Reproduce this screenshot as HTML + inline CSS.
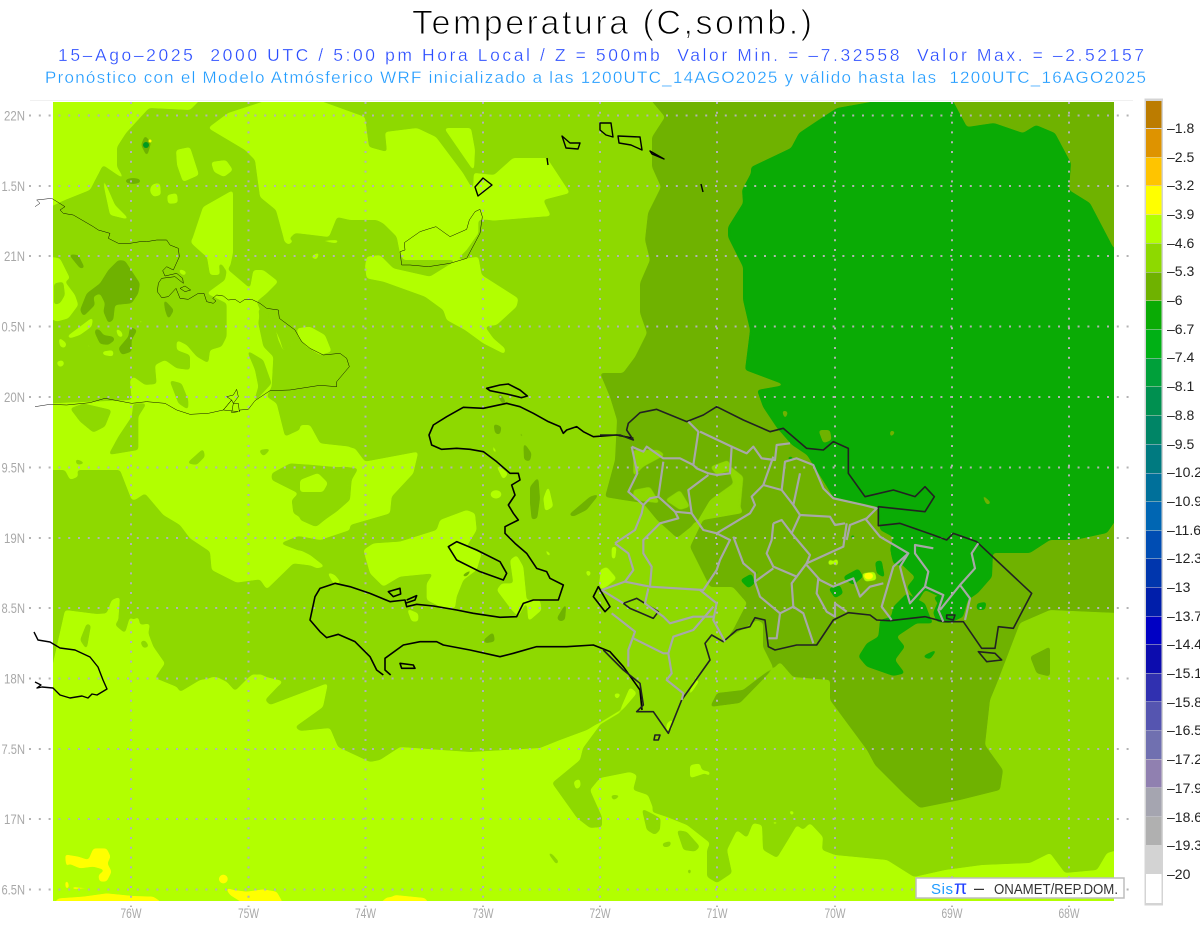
<!DOCTYPE html>
<html><head><meta charset="utf-8"><title>Temperatura</title>
<style>html,body{margin:0;padding:0;background:#fff}svg{display:block}text{font-family:"Liberation Sans",sans-serif;white-space:pre}</style></head>
<body>
<svg xmlns="http://www.w3.org/2000/svg" width="1200" height="927" viewBox="0 0 1200 927">
<defs><clipPath id="m"><rect x="53" y="102" width="1061" height="799"/></clipPath>
<filter id="s" x="-10%" y="-10%" width="120%" height="120%" color-interpolation-filters="sRGB"><feGaussianBlur stdDeviation="1.5"/><feComponentTransfer><feFuncA type="linear" slope="10" intercept="-4.5"/></feComponentTransfer></filter>
<filter id="s3" x="-10%" y="-10%" width="120%" height="120%" color-interpolation-filters="sRGB"><feGaussianBlur stdDeviation="4.5"/><feComponentTransfer><feFuncA type="linear" slope="10" intercept="-4.5"/></feComponentTransfer></filter>
</defs>
<rect width="1200" height="927" fill="#fff"/>
<text x="412" y="34" font-size="34" fill="#000" stroke="#fff" stroke-width="1" textLength="400" lengthAdjust="spacing">Temperatura (C,somb.)</text>
<text x="58" y="61" font-size="17.5" fill="#2a4cff" stroke="#fff" stroke-width=".3" textLength="1086" lengthAdjust="spacing">15–Ago–2025  2000 UTC / 5:00 pm Hora Local / Z = 500mb  Valor Min. = –7.32558  Valor Max. = –2.52157</text>
<text x="45" y="83" font-size="17" fill="#1f9bff" stroke="#fff" stroke-width=".3" textLength="1101" lengthAdjust="spacing">Pronóstico con el Modelo Atmósferico WRF inicializado a las 1200UTC_14AGO2025 y válido hasta las  1200UTC_16AGO2025</text>
<rect x="30" y="100" width="1103" height="1" fill="#f0f0f0"/>
<g clip-path="url(#m)">
<rect x="53" y="102" width="1061" height="799" fill="#8ed900"/>
<g fill="#b2ff00" filter="url(#s)">
<polygon points="50,99 201,99 190,110 149,108 126,133 117,147 117,167 125,180 103,165 90,190 65,200 50,207"/>
<polygon points="208,128 228,113 268,100 318,100 365,117 369,147 387,152 385,132 417,128 436,137 463,173 473,190 475,150 471,128 444,128 475,173 494,175 513,158 547,158 570,193 543,200 551,216 480,220 350,220 337,217 329,237 295,233 285,243 276,210 260,197 255,160 245,150"/>
<polygon points="203,207 233,190 233,253 230,267 210,260 191,243"/>
<polygon points="101,173 115,205 130,220 110,215"/>
<polygon points="153,184 160,183 161,195 153,197"/>
<polygon points="167,195 177,193 178,203 168,204"/>
<polygon points="176,150 190,147 199,175 183,182 177,165"/>
<polygon points="211,162 226,160 233,170 224,177 214,172"/>
<ellipse cx="155" cy="190" rx="5" ry="6"/>
<g transform="translate(50,240) scale(.33333)">
<polygon points="0,490 245,480 240,420 250,410 285,435 320,432 315,375 345,360 380,385 420,390 420,345 380,330 380,300 410,315 440,350 475,370 480,330 515,320 530,290 530,180 590,180 620,185 630,210 625,250 640,320 670,350 665,440 650,470 680,490 705,590 780,555 810,610 900,620 900,690 0,690"/>
<polygon points="420,0 540,0 535,90 600,145 610,90 640,90 685,125 650,160 620,185 590,180 530,190 470,160 525,120 530,95 505,55 510,105 480,105 470,45"/>
<polygon points="0,50 30,55 60,115 45,125 75,165 85,195 55,235 20,245 0,235"/>
<polygon points="50,290 130,230 125,260 90,285 60,295"/>
<polygon points="25,290 50,310 45,325 30,320"/>
<polygon points="18,365 40,360 43,375 28,383"/>
<polygon points="105,295 125,325 115,325"/>
<polygon points="155,335 190,330 190,350 160,345"/>
<polygon points="195,262 215,275 220,293 205,290"/>
<polygon points="265,240 280,240 272,255"/>
<polygon points="385,85 410,95 405,108 390,100"/>
<polygon points="780,50 810,35 800,60"/>
<polygon points="700,0 735,0 715,15"/>
<polygon points="770,0 870,0 860,10"/>
<polygon points="670,240 700,255 722,285 720,320 700,333 685,300"/>
<polygon points="740,265 780,260 825,285 845,335 810,345 770,320 745,290"/>
</g>
<g transform="translate(350,200) scale(.33333)">
<polygon points="0,60 15,55 45,35 60,50 100,70 140,110 150,160 160,180 320,180 350,150 385,100 385,55 430,62 600,48 580,0 0,0"/>
<polygon points="50,170 90,165 130,205 240,230 320,180 385,170 395,225 505,295 500,320 440,375 405,380 430,415 465,445 465,463 400,430 345,390 290,360 280,330 225,290 100,245 50,235 45,200"/>
</g>
<g transform="translate(50,460) scale(.33333)">
<polygon points="200,0 210,30 245,120 255,120 285,100 340,165 390,195 420,235 480,275 485,330 560,368 630,358 650,388 730,310 825,322 780,285 690,250 745,228 810,240 900,210 900,0"/>
<polygon points="30,0 60,60 85,50 75,0"/>
<polygon points="100,0 190,0 190,15 130,15"/>
<polygon points="830,335 855,345 873,368 845,360"/>
<polygon points="430,675 490,650 530,675"/>
<polygon points="590,655 630,642 700,675"/>
<polygon points="0,680 0,650 45,450 140,462 170,460 185,420 210,410 205,480 195,495 225,520 240,470 250,480 265,470 270,495 300,490 295,520 310,560 345,610 315,650 240,655 240,680"/>
</g>
<g transform="translate(300,370) scale(.33333)">
<polygon points="0,165 30,165 60,220 165,235 195,275 355,245 340,310 275,380 270,430 150,465 65,510 0,455"/>
<polygon points="190,540 220,520 300,515 410,480 420,450 500,420 525,430 530,480 500,530 545,550 530,600 490,630 470,680 465,715 430,715 380,690 380,640 400,610 300,620 250,650 210,610"/>
<polygon points="630,570 650,555 670,590 680,690 720,690 725,720 685,755 680,695 655,740 635,720 590,660 605,640 640,640"/>
<polygon points="0,540 30,555 75,590 50,595 0,570"/>
<polygon points="80,605 125,640 100,640"/>
<polygon points="320,715 355,730 355,755 335,755"/>
<polygon points="140,745 155,750 145,755"/>
<polygon points="475,765 498,775 490,782"/>
<ellipse cx="588" cy="373" rx="17" ry="13"/>
<polygon points="745,345 760,410 735,425 730,385"/>
<polygon points="570,205 595,255 580,245"/>
<polygon points="585,280 625,310 610,330"/>
<polygon points="725,525 755,555 745,560"/>
<polygon points="855,600 875,605 865,625"/>
<polygon points="905,595 945,625 920,640 895,650"/>
<polygon points="935,530 950,530 945,570 935,565"/>
</g>
<polygon points="50,673 60,643 80,640 88,640 83,652 100,640 155,653 165,663 155,678 177,687 180,692 200,680 217,677 227,682 235,691 248,678 253,674 283,681 265,700 270,705 328,683 323,707 295,727 300,731 330,728 338,747 370,762 380,760 400,747 470,752 540,748 560,740 587,730 620,710 630,687 637,693 620,713 600,725 583,748 580,760 552,783 577,818 590,828 602,827 602,817 590,790 600,778 630,772 637,775 633,790 648,795 653,808 652,812 667,817 687,825 710,843 707,850 707,877 717,883 732,873 727,850 737,830 747,838 753,823 762,825 763,850 777,858 788,840 797,825 803,830 810,823 823,837 822,850 835,855 887,860 914,877 945,870 982,865 1030,863 1050,853 1065,873 1097,870 1107,853 1118,850 1118,905 50,905"/>
</g>
<g fill="#8ed900" filter="url(#s)">
<g transform="translate(50,240) scale(.33333)">
<polygon points="12,130 40,125 45,165 30,190 12,195"/>
<polygon points="60,505 100,490 185,510 165,560 130,578 90,545"/>
<polygon points="250,490 290,490 265,530 265,630 175,645 205,590 245,530"/>
<polygon points="358,420 395,430 415,480 415,510 385,490"/>
<polygon points="590,330 640,360 665,430 610,490 625,440 615,390"/>
<polygon points="410,670 460,625 465,650 440,675"/>
<polygon points="625,630 665,625 640,650"/>
<polygon points="75,655 110,670 80,675"/>
<polygon points="625,205 665,215 665,245 690,300 700,333 720,325 745,290 740,270 700,255 670,235 630,250"/>
</g>
<g transform="translate(50,460) scale(.33333)">
<polygon points="665,40 720,10 790,15 900,25 900,120 860,150 800,200 730,160 725,120 745,100 665,60"/>
<polygon points="90,540 110,490 123,495 110,570"/>
<polygon points="270,545 285,540 298,560 280,565"/>
<polygon points="315,385 335,385 325,398"/>
</g>
<g transform="translate(300,370) scale(.33333)">
<polygon points="0,285 50,300 130,290 175,295 155,330 150,390 110,425 45,470 0,450"/>
</g>
<g transform="translate(540,680) scale(.33333)">
<polygon points="305,385 335,400 362,415 360,450 345,465 320,450"/>
<polygon points="410,450 440,455 480,500 465,515 430,510"/>
<polygon points="365,490 395,482 390,500 370,502"/>
<polygon points="255,390 275,390 270,400"/>
<polygon points="210,345 245,345 220,362"/>
<polygon points="20,515 35,520 57,545 50,555"/>
<polygon points="440,570 455,565 450,590"/>
</g>
</g>
<g fill="#b2ff00" filter="url(#s)">
<polygon points="300,480 318,473 328,483 323,492 300,492"/>
<g transform="translate(540,680) scale(.33333)">
<polygon points="100,305 120,295 122,320 108,330"/>
<polygon points="450,255 480,250 485,270 510,275 510,290 495,280 465,290 450,295"/>
<polygon points="745,390 765,395 755,410"/>
<polygon points="220,40 245,40 230,60"/>
<polygon points="690,425 720,425 705,435"/>
<polygon points="380,130 400,115 395,150 378,155"/>
<polygon points="460,0 480,0 440,60"/>
</g>
</g>
<g fill="#6fb200" filter="url(#s)">
<polygon points="650,99 665,117 652,137 652,167 661,187 648,213 645,240 650,260 640,283 640,313 647,333 635,357 623,373 600,373 610,397 617,420 615,460 605,497 623,500 643,503 657,520 677,538 697,522 710,500 733,488 743,513 703,520 690,547 710,587 733,587 747,603 733,630 725,640 757,620 763,623 763,647 773,667 743,690 717,693 710,707 740,703 780,662 793,677 830,680 830,700 847,723 867,750 875,765 905,795 920,808 960,800 1000,790 1003,770 985,745 990,700 997,683 1020,623 1050,610 1118,613 1118,99"/>
</g>
<g fill="#6fb200" filter="url(#s)">
<g transform="translate(50,240) scale(.33333)">
<polygon points="205,60 225,62 250,100 270,130 265,160 245,190 195,195 190,240 175,250 160,215 165,190 150,160 130,170 135,195 100,230 90,210 110,160 150,130 175,90"/>
<polygon points="55,42 85,45 105,85 90,85"/>
<polygon points="155,70 175,68 165,78"/>
<polygon points="135,265 150,270 160,285 190,290 195,300 175,315 150,312 135,280"/>
<polygon points="240,260 262,270 245,300 245,335 215,345 205,325 235,290"/>
<polygon points="340,175 372,210 355,240 345,210"/>
</g>
<g transform="translate(300,370) scale(.33333)">
<polygon points="580,160 605,170 600,195 585,190"/>
<polygon points="660,175 672,205 660,200"/>
<polygon points="670,215 695,250 690,275 672,270"/>
<polygon points="690,350 715,320 720,385 712,445 695,450 690,400"/>
<polygon points="805,435 870,380 900,370 860,420 820,440"/>
<polygon points="550,810 580,785 585,815 555,820"/>
<polygon points="770,745 800,695 795,750 780,755"/>
<polygon points="590,70 605,75 620,100 605,100"/>
<polygon points="410,600 460,570 415,605"/>
<polygon points="480,620 525,590 500,620"/>
</g>
<ellipse cx="133" cy="181" rx="8" ry="3"/>
<polygon points="145,135 151,143 147,157 141,145"/>
<polygon points="1033,657 1050,646 1050,675 1037,673"/>
</g>
<g fill="#0aab05" filter="url(#s)">
<polygon points="887,99 837,108 826,115 799,133 791,148 751,167 751,173 742,190 743,203 728,227 728,237 743,267 743,300 750,330 745,370 785,385 757,390 763,407 777,428 792,445 807,455 827,487 833,497 860,503 878,507 880,530 893,537 890,550 893,558 900,563 915,577 907,587 917,603 925,590 940,597 933,613 937,622 950,623 963,617 968,600 978,593 992,577 993,553 1030,553 1050,540 1075,540 1107,533 1118,517 1118,250 1113,247 1090,203 1069,190 1071,163 1055,133 1036,125 1023,133 994,123 967,127 952,99"/>
</g>
<g transform="translate(600,390) scale(.33333)">
<g fill="#0aab05" filter="url(#s3)">
<polygon points="840,690 975,650 1000,700 950,700 890,740 915,770 885,810 915,850 880,858 800,830 775,800 800,760 835,740"/>
<polygon points="880,650 920,610 975,640 990,680 870,695"/>
<polygon points="965,800 1015,775 990,808"/>
<polygon points="420,570 455,550 465,580 445,595"/>
<polygon points="465,550 480,520 470,565"/>
<polygon points="730,560 775,535 790,560 760,585 735,570"/>
<polygon points="825,515 845,510 855,565 830,550"/>
<polygon points="685,595 720,585 730,610 705,625"/>
<polygon points="1130,640 1160,635 1155,660 1130,660"/>
<polygon points="750,435 770,435 755,450"/>
<polygon points="560,200 585,200 570,215"/>
<polygon points="870,480 905,490 905,530 880,520"/>
<polygon points="1000,620 1030,615 1025,660"/>
</g>
<g fill="#6fb200" filter="url(#s3)">
<polygon points="545,60 565,65 555,90"/>
<polygon points="655,120 690,120 695,150 670,160"/>
<polygon points="870,120 888,125 870,145"/>
<polygon points="1140,305 1175,340 1160,345"/>
<polygon points="1215,355 1250,358 1215,362"/>
<polygon points="1080,90 1095,95 1085,100"/>
<polygon points="735,140 748,145 740,155"/>
<polygon points="1290,800 1350,770 1350,860 1310,850"/>
</g>
<g fill="#8ed900" filter="url(#s3)">
<polygon points="100,180 175,180 195,195 130,230 100,260"/>
<polygon points="145,260 240,215 150,255"/>
<polygon points="100,300 150,290 180,340 100,330"/>
<polygon points="195,330 240,300 270,350 240,360"/>
<polygon points="330,230 385,210 395,240 350,255"/>
<polygon points="380,220 430,260 420,370 330,380 330,330 400,280"/>
<polygon points="230,445 250,440 285,395 310,395 290,420"/>
</g>
<g fill="#b2ff00" filter="url(#s3)">
<polygon points="785,550 825,545 830,570 795,575"/>
<polygon points="685,510 697,508 697,526 685,526"/>
<polygon points="702,508 714,506 714,527 702,527"/>
<polygon points="0,540 20,530 50,565 20,590 0,600"/>
</g>
<ellipse cx="806" cy="558" rx="13" ry="10" fill="#ffff00"/>
</g>
<g fill="#ffff00" filter="url(#s)">
<g transform="translate(0,640) scale(.33333)">
<polygon points="195,642 205,645 235,650 265,660 280,625 320,625 332,650 322,670 335,695 320,725 298,725 295,705 315,690 280,680 240,685 205,670 200,695"/>
<polygon points="195,720 205,725 207,745 197,748"/>
<polygon points="215,740 270,743 270,748 215,748"/>
<circle cx="670" cy="717" r="14"/>
<polygon points="160,790 175,775 250,770 320,760 400,768 460,770 490,790"/>
<polygon points="675,742 700,750 740,755 790,748 830,755 850,790 730,790 690,765"/>
<polygon points="1030,790 1050,780 1060,790"/>
<polygon points="1140,790 1160,772 1200,770 1200,790"/>
</g>
<polygon points="378,905 395,895 425,898 430,905"/>
</g>
<circle cx="146" cy="145" r="3" fill="#009a20"/>
<circle cx="150" cy="141" r="1.5" fill="#ffff00"/>
</g>
<g stroke="#b3b3b3" stroke-width="2" stroke-dasharray="2 7.8" fill="none">
<path d="M29,115.5H1135M29,186H1135M29,256H1135M29,326.5H1135M29,397H1135M29,467.5H1135M29,538H1135M29,608H1135M29,678.5H1135M29,749H1135M29,819H1135M29,889.5H1135"/>
<path d="M131,102V907M248.5,102V907M365.5,102V907M483,102V907M600,102V907M717,102V907M835,102V907M952,102V907M1069,102V907"/>
</g>
<g fill="none" stroke="#000" stroke-width="1.4" stroke-linejoin="round">
<g transform="translate(50,240) scale(.33333)">
<polyline points="-45,-100 -30,-110 -40,-120 5,-125 45,-100 30,-90 40,-80 70,-75 130,-40 145,-30 180,-20 175,-5 205,10 240,10 270,5 290,5 320,0 350,0 360,15 385,25 388,50 370,90 350,80 338,92 345,108 380,100 398,115 400,130 375,110 335,115 325,130 322,155 335,173 355,170 378,145 390,175 415,178 445,160 462,160 470,185 490,190 498,183 488,175 500,165 520,168 535,180 555,178 570,188 585,178 605,178 630,190 650,205 685,210 688,235 735,270 755,305 780,325 820,345 870,340 890,355 898,380 860,425 860,440 810,436 720,450 660,452 615,482 595,508 570,510 568,515 565,490 550,490 565,470 560,448 550,465 530,470 545,480 520,510 475,520 420,523 380,510 345,490 290,485 245,490 165,475 120,488 50,495 0,493 -45,500"/>
<polygon points="390,145 405,138 422,150 405,155"/>
<polygon points="520,510 545,480 550,490 545,518 565,515"/>
</g>
<polyline points="34,632 38,640 50,642 60,648 75,650 90,657 98,667 103,680 107,689 97,695 92,694 88,698 82,696 70,698 60,695 53,688 42,687 37,688 41,685 35,682"/>
<g transform="translate(350,200) scale(.33333)">
<polygon points="150,155 165,150 163,128 210,95 235,87 258,80 300,110 350,88 358,60 375,35 390,28 397,50 390,100 350,175 300,190 235,200 180,195 155,195"/>
</g>
<polygon points="483,178 492,185 478,196 475,187"/>
<polygon points="562,136 570,143 580,143 578,149 566,148"/>
<polyline points="547,158 548,165"/>
<polygon points="600,123 611,123 613,137 606,135 600,130"/>
<polygon points="618,136 640,137 642,150 631,145 619,143"/>
<polygon points="650,151 664,159 652,154"/>
<polyline points="701,184 703,192"/>
<g transform="translate(300,370) scale(.33333)" stroke-width="4.8">
<polygon points="560,55 600,45 625,42 660,60 682,78 665,83 620,72 570,62"/>
<polyline points="1000,205 950,195 880,200 850,185 830,170 800,180 790,190 780,170 745,155 700,130 660,110 620,100 550,115 490,112 440,140 400,165 387,195 395,225 425,238 470,235 510,238 550,245 590,275 630,310 655,310 660,330 635,345 645,375 625,405 640,430 655,450 615,470 615,490 645,520 680,550 710,595 740,605 750,625 790,645 775,690 700,690 670,700 650,740 600,742 520,730 470,720 400,708 350,703 320,710 315,690 270,695 210,670 150,650 105,640 60,655 45,680 30,750 60,785 80,803 115,793 165,815 210,860 230,900 250,915"/>
<polyline points="272,915 255,900 255,865 310,825 360,815 410,815 430,825 510,840 600,860 640,850 710,830 800,830 880,825 930,845 970,890 1020,960 1026,1020"/>
<polygon points="445,530 470,515 530,540 600,575 620,610 610,630 540,605 470,570"/>
<polygon points="265,665 300,655 302,672 280,680"/>
<polygon points="300,880 340,885 345,895 305,895"/>
<polygon points="880,680 895,650 930,710 915,725"/>
<polyline points="320,690 350,677 345,690 315,700"/>
</g>
<g transform="translate(600,390) scale(.33333)" stroke-width="4.8" stroke="#222">
<polyline points="10,780 70,840 120,880 130,945 110,965 160,965 205,1030 245,930 330,810 315,760 335,735 370,755 410,720 450,710 465,683 495,690 505,770 525,780 590,765 650,765 700,690 745,668 810,675 830,690 870,692 975,680 1030,695 1090,695 1145,775 1185,775 1195,710 1240,715 1295,610 1130,455 1060,430 1040,450 1000,435 900,400 835,407 835,350 975,365 1003,320 975,290 945,320 880,300 795,320 745,250 745,175 700,155 670,180 620,175 550,115 510,125 430,90 350,50 310,75 260,95 170,58 120,68 85,100 80,120 100,150 60,135 0,135"/>
<polygon points="1135,785 1185,790 1205,810 1160,815"/>
<polygon points="70,640 110,625 175,665 160,685 90,655"/>
<polygon points="1040,675 1065,675 1060,690 1040,685"/>
<polygon points="165,1035 180,1035 175,1050 162,1050"/>
</g>
</g>
<g transform="translate(600,390) scale(.33333)" fill="none" stroke="#a8a8a8" stroke-width="6.5" stroke-linejoin="round">
<polyline points="95,170 112,250 85,305 130,345 125,370 105,420 45,460"/>
<polyline points="95,170 130,185 140,170 190,205 240,205 280,225 295,125 265,95"/>
<polyline points="280,225 290,235 325,250 350,255 390,250 395,170 300,125"/>
<polyline points="395,170 440,190 460,170 485,205 525,210 530,165 570,160"/>
<polyline points="190,215 175,320 150,325 130,345"/>
<polyline points="175,320 225,365 275,370 265,300 325,255"/>
<polyline points="275,370 310,420 350,430 400,400 450,370 465,345 455,320 490,285 520,200"/>
<polyline points="490,285 545,300 555,215 590,205 640,225 670,295 700,325 790,345 830,355 800,385 750,405 740,450"/>
<polyline points="545,300 580,345 600,250"/>
<polyline points="580,345 600,375 690,380 705,405 735,400"/>
<polyline points="600,375 575,430 630,495 620,520 730,470 740,400"/>
<polyline points="520,400 545,390 575,430"/>
<polyline points="520,400 515,450 500,490 520,530 590,560 620,520"/>
<polyline points="795,385 840,440 925,490 880,530 845,650 875,690"/>
<polyline points="620,525 660,570 700,590 760,565 780,620 810,590 850,580"/>
<polyline points="520,535 465,575 480,620 540,670 580,650 575,580 590,560"/>
<polyline points="540,670 530,745 505,745"/>
<polyline points="580,650 610,670 640,760"/>
<polyline points="655,565 650,610 680,665 705,680 705,640 740,665"/>
<polyline points="925,490 900,530 910,570 930,640 975,590 985,545 945,490 945,465 1000,475"/>
<polyline points="975,590 1030,615 1015,660 1030,695"/>
<polyline points="1135,460 1115,490 1125,535 1080,585 1020,660"/>
<polyline points="1080,585 1110,625 1095,690"/>
<polyline points="350,430 390,450 360,510 350,540 310,600 150,590 75,575 5,600"/>
<polyline points="400,440 430,520 465,550 465,575"/>
<polyline points="150,590 155,530 130,490 130,450 180,400 235,385 225,365"/>
<polyline points="300,600 350,640 340,690 375,755"/>
<polyline points="340,650 280,720 220,740 205,790 215,850 200,870 250,910 245,930"/>
<polyline points="145,595 135,640 190,680 210,700 280,680 340,680"/>
<polyline points="5,600 70,640"/>
<polyline points="35,670 105,725 85,780 85,830"/>
<polyline points="100,745 190,790 205,790"/>
<polyline points="45,460 85,490 100,540 75,575"/>
</g>
<g font-size="14" fill="#a8a8a8" lengthAdjust="spacingAndGlyphs">
<text x="4" y="120.5" textLength="21" lengthAdjust="spacingAndGlyphs">22N</text><text x="1.5" y="191" textLength="23.5" lengthAdjust="spacingAndGlyphs">1.5N</text><text x="4" y="261" textLength="21" lengthAdjust="spacingAndGlyphs">21N</text><text x="1.5" y="331.5" textLength="23.5" lengthAdjust="spacingAndGlyphs">0.5N</text><text x="4" y="402" textLength="21" lengthAdjust="spacingAndGlyphs">20N</text><text x="1.5" y="472.5" textLength="23.5" lengthAdjust="spacingAndGlyphs">9.5N</text><text x="4" y="543" textLength="21" lengthAdjust="spacingAndGlyphs">19N</text><text x="1.5" y="613" textLength="23.5" lengthAdjust="spacingAndGlyphs">8.5N</text><text x="4" y="683.5" textLength="21" lengthAdjust="spacingAndGlyphs">18N</text><text x="1.5" y="754" textLength="23.5" lengthAdjust="spacingAndGlyphs">7.5N</text><text x="4" y="824" textLength="21" lengthAdjust="spacingAndGlyphs">17N</text><text x="1.5" y="894.5" textLength="23.5" lengthAdjust="spacingAndGlyphs">6.5N</text>
</g>
<g font-size="14" fill="#a8a8a8">
<text x="120.5" y="918" textLength="21" lengthAdjust="spacingAndGlyphs">76W</text><text x="238" y="918" textLength="21" lengthAdjust="spacingAndGlyphs">75W</text><text x="355" y="918" textLength="21" lengthAdjust="spacingAndGlyphs">74W</text><text x="472.5" y="918" textLength="21" lengthAdjust="spacingAndGlyphs">73W</text><text x="589.5" y="918" textLength="21" lengthAdjust="spacingAndGlyphs">72W</text><text x="706.5" y="918" textLength="21" lengthAdjust="spacingAndGlyphs">71W</text><text x="824.5" y="918" textLength="21" lengthAdjust="spacingAndGlyphs">70W</text><text x="941.5" y="918" textLength="21" lengthAdjust="spacingAndGlyphs">69W</text><text x="1058.5" y="918" textLength="21" lengthAdjust="spacingAndGlyphs">68W</text>
</g>
<rect x="916" y="878" width="208" height="20" fill="#fff" stroke="#bdbdbd" stroke-width="1.5"/>
<text x="931" y="894" font-size="15" fill="#1f9bff" textLength="22" lengthAdjust="spacing">Sis</text>
<text x="954" y="894" font-size="19" fill="#2040ff">π</text>
<text x="974" y="894" font-size="18" fill="#333">–</text>
<text x="994" y="894" font-size="14.5" fill="#333" textLength="124" lengthAdjust="spacingAndGlyphs">ONAMET/REP.DOM.</text>
<rect x="1144.5" y="98.5" width="18.5" height="807" fill="#d4d4d4"/>
<g>
<rect x="1146" y="101" width="15.5" height="27" fill="#bc7c00"/>
<rect x="1146" y="129" width="15.5" height="28" fill="#de9300"/>
<rect x="1146" y="157.5" width="15.5" height="28" fill="#ffc400"/>
<rect x="1146" y="186" width="15.5" height="28.5" fill="#ffff00"/>
<rect x="1146" y="215" width="15.5" height="28" fill="#b2ff00"/>
<rect x="1146" y="243.5" width="15.5" height="28.5" fill="#8ed900"/>
<rect x="1146" y="272.5" width="15.5" height="28" fill="#6fb200"/>
<rect x="1146" y="301" width="15.5" height="28" fill="#0aab05"/>
<rect x="1146" y="329.5" width="15.5" height="28.5" fill="#00b015"/>
<rect x="1146" y="358.5" width="15.5" height="28" fill="#00a03a"/>
<rect x="1146" y="387" width="15.5" height="28.5" fill="#009050"/>
<rect x="1146" y="416" width="15.5" height="28" fill="#008566"/>
<rect x="1146" y="444.5" width="15.5" height="28.5" fill="#007a80"/>
<rect x="1146" y="473.5" width="15.5" height="28" fill="#00709a"/>
<rect x="1146" y="502" width="15.5" height="28.5" fill="#0066b3"/>
<rect x="1146" y="531" width="15.5" height="27.5" fill="#004db3"/>
<rect x="1146" y="559" width="15.5" height="28" fill="#0036ad"/>
<rect x="1146" y="587.5" width="15.5" height="28.5" fill="#001eaa"/>
<rect x="1146" y="616.5" width="15.5" height="27.5" fill="#0000c4"/>
<rect x="1146" y="644.5" width="15.5" height="28.5" fill="#0c0cae"/>
<rect x="1146" y="673.5" width="15.5" height="28" fill="#3030b0"/>
<rect x="1146" y="702" width="15.5" height="28.5" fill="#5555b0"/>
<rect x="1146" y="731" width="15.5" height="28" fill="#7070b0"/>
<rect x="1146" y="759.5" width="15.5" height="28" fill="#9080b0"/>
<rect x="1146" y="788" width="15.5" height="28.5" fill="#a5a5b0"/>
<rect x="1146" y="817" width="15.5" height="28" fill="#b0b0b0"/>
<rect x="1146" y="845.5" width="15.5" height="28.5" fill="#d3d3d3"/>
<rect x="1146" y="874" width="15.5" height="29" fill="#fff"/>
</g>
<g font-size="14" fill="#222">
<text x="1167" y="133">–1.8</text><text x="1167" y="162">–2.5</text><text x="1167" y="190">–3.2</text><text x="1167" y="219">–3.9</text><text x="1167" y="248">–4.6</text><text x="1167" y="276">–5.3</text><text x="1167" y="305">–6</text><text x="1167" y="334">–6.7</text><text x="1167" y="362">–7.4</text><text x="1167" y="391">–8.1</text><text x="1167" y="420">–8.8</text><text x="1167" y="449">–9.5</text><text x="1167" y="477">–10.2</text><text x="1167" y="506">–10.9</text><text x="1167" y="535">–11.6</text><text x="1167" y="563">–12.3</text><text x="1167" y="592">–13</text><text x="1167" y="621">–13.7</text><text x="1167" y="649">–14.4</text><text x="1167" y="678">–15.1</text><text x="1167" y="707">–15.8</text><text x="1167" y="735">–16.5</text><text x="1167" y="764">–17.2</text><text x="1167" y="793">–17.9</text><text x="1167" y="822">–18.6</text><text x="1167" y="850">–19.3</text><text x="1167" y="879">–20</text>
</g>
</svg>
</body></html>
